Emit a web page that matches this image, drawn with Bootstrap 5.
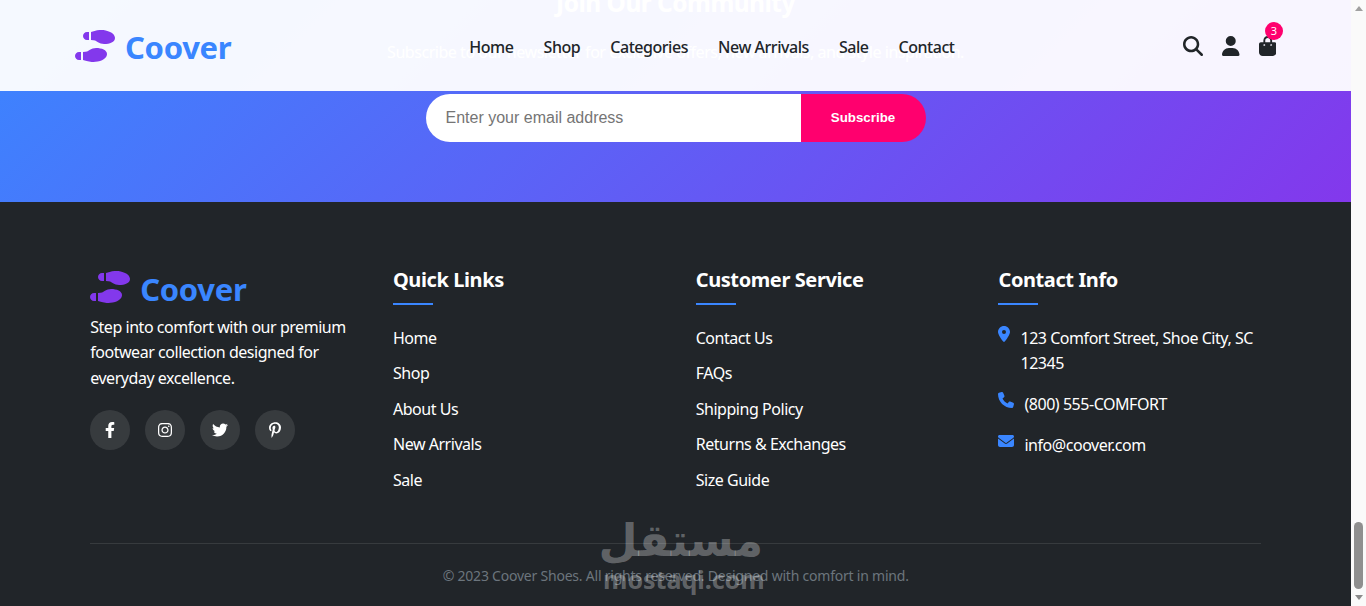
<!DOCTYPE html>
<html lang="en">
<head>
  <meta charset="UTF-8">
  <title>Coover Shoes</title>
  <link href="https://cdn.jsdelivr.net/npm/bootstrap@5.3.2/dist/css/bootstrap.min.css" rel="stylesheet">
  <style>
    html, body {
      height: 606px;
      overflow: hidden;
    }
    body {
      font-family: "Noto Sans", "Open Sans", sans-serif;
      font-size: 16px;
      line-height: 1.6;
      letter-spacing: -0.46px;
      background-color: #fff;
    }
    svg {
      fill: currentColor;
      display: block;
      flex-shrink: 0;
    }
    .page-main {
      width: 1351px;
      height: 606px;
    }
    .top-nav {
      height: 91px;
      background-color: rgba(255, 255, 255, 0.95);
    }
    .nav-inner {
      width: 1201px;
      margin: 0 auto;
      height: 100%;
    }
    .brand-link {
      gap: 10px;
    }
    .brand-text {
      font-size: 31px;
      font-weight: 700;
      color: #3a86ff;
      line-height: 46px;
      letter-spacing: -0.3px;
    }
    .brand-icon {
      color: #8338ec;
      width: 40px;
      height: 32px;
    }
    .top-nav .brand-text {
      margin-top: 3px;
    }
    .footer-brand .brand-icon {
      margin-top: -6px;
    }
    .footer-brand .brand-text {
      margin-top: -1px;
    }
    .main-links {
      gap: 30px;
      margin-left: 238px;
      margin-top: 5px;
    }
    .main-links a {
      color: #212529;
      font-weight: 500;
      text-decoration: none;
    }
    .nav-icons {
      gap: 19px;
      color: #212529;
      margin-left: auto;
      margin-top: 1px;
    }
    .cart-count {
      top: -14px;
      right: -7px;
      width: 18px;
      height: 18px;
      font-size: 11px;
      line-height: 18px;
      letter-spacing: 0;
      background-color: #ff006e;
      color: #fff;
    }
    .hero-band {
      height: 202px;
      padding-bottom: 60px;
      overflow: hidden;
      background: linear-gradient(135deg, #3a86ff, #8338ec);
      color: #fff;
    }
    .hero-band > * {
      flex-shrink: 0;
    }
    .hero-band h2 {
      font-size: 24.4px;
      font-weight: 700;
      margin-bottom: 23px;
      white-space: nowrap;
    }
    .hero-band p {
      margin-bottom: 28px;
      white-space: nowrap;
    }
    .sub-form {
      width: 500px;
      height: 48px;
    }
    .sub-form input {
      border: 0;
      outline: 0;
      width: 375px;
      padding: 0 20px;
      font-family: "Liberation Sans", sans-serif;
      font-size: 16px;
      letter-spacing: 0;
      border-radius: 50px 0 0 50px;
    }
    .sub-form input::placeholder {
      color: #757575;
    }
    .sub-form button {
      border: 0;
      width: 125px;
      background-color: #ff006e;
      color: #fff;
      font-family: "Liberation Sans", sans-serif;
      font-size: 13.33px;
      font-weight: 700;
      letter-spacing: 0;
      border-radius: 0 50px 50px 0;
    }
    .site-footer {
      height: 404px;
      background-color: #212529;
      color: #fff;
      padding-top: 60px;
    }
    .footer-inner {
      width: 1171px;
      margin-left: 90.2px;
    }
    .footer-cols {
      --bs-gutter-x: 40px;
    }
    .footer-brand {
      padding-top: 5px;
      margin-bottom: 2.5px;
      gap: 10px;
    }
    .footer-about {
      margin-bottom: 18.5px;
    }
    .round-social {
      width: 40px;
      height: 40px;
      background-color: rgba(255, 255, 255, 0.1);
      color: #fff;
    }
    .social-row {
      gap: 15px;
    }
    .col-heading {
      position: relative;
      font-size: 20px;
      font-weight: 700;
      line-height: 36px;
      padding-bottom: 7px;
      margin-bottom: 20.5px;
      letter-spacing: -0.4px;
    }
    .col-heading::after {
      content: "";
      position: absolute;
      left: 0;
      bottom: 0;
      width: 40px;
      height: 2px;
      background-color: #3a86ff;
    }
    .foot-links li {
      margin-bottom: 10px;
    }
    .foot-links a {
      color: #fff;
      text-decoration: none;
    }
    .contact-list li {
      margin-bottom: 15.3px;
    }
    .contact-icon {
      color: #3a86ff;
      margin-right: 10px;
    }
    .copy-row {
      margin-top: 39.5px;
      border-top: 1px solid rgba(255, 255, 255, 0.1);
      padding-top: 21px;
      font-size: 14px;
      letter-spacing: -0.22px;
      text-align: center;
      color: #6c757d;
    }
    .watermark {
      left: 603px;
      top: 513px;
      width: 160px;
      color: rgba(255, 255, 255, 0.3);
      pointer-events: none;
      letter-spacing: 0;
    }
    .watermark .wm-ar {
      font-family: "DejaVu Sans", sans-serif;
      font-size: 45px;
      font-weight: 700;
      line-height: 56px;
    }
    .watermark .wm-en {
      font-family: "Noto Sans", sans-serif;
      font-size: 25px;
      font-weight: 700;
      line-height: 22px;
      margin-top: -1px;
    }
    .fake-scroll {
      width: 15px;
      height: 606px;
      background-color: #fafafa;
    }
    .scroll-up, .scroll-down {
      width: 0;
      height: 0;
      border-left: 4.5px solid transparent;
      border-right: 4.5px solid transparent;
    }
    .scroll-up {
      margin-top: 6px;
      border-bottom: 5px solid #a0a0a0;
    }
    .scroll-down {
      margin-top: 6px;
      margin-bottom: 6px;
      border-top: 5px solid #8a8a8a;
    }
    .scroll-thumb {
      width: 9px;
      height: 67px;
      margin-top: auto;
      border-radius: 5px;
      background-color: #8f8f8f;
    }
  </style>
</head>
<body>
  <div class="d-flex">
    <div class="page-main position-relative">
      <nav class="top-nav position-absolute top-0 start-0 end-0">
        <div class="nav-inner d-flex align-items-center">
          <a href="#" class="brand-link d-flex align-items-center text-decoration-none">
            <svg class="brand-icon" viewBox="0 0 640 512"><path d="M192 160h32V32h-32c-35.35 0-64 28.65-64 64s28.65 64 64 64zM0 416c0 35.35 28.65 64 64 64h32V352H64c-35.35 0-64 28.65-64 64zm337.46-128c-34.91 0-76.16 13.12-104.73 32-24.79 16.38-44.52 32-104.73 32v128l57.53 15.97c26.21 7.28 53.01 13.12 80.51 15.03 32.69 2.27 65.6.67 97.58-6.2C472.9 481.3 512 429.22 512 384c0-64-84.18-96-174.54-96zM491.42 7.19C459.44.32 426.53-1.28 393.84.99c-27.5 1.91-54.3 7.75-80.51 15.03L256 32v128c60.2 0 79.94 15.62 104.73 32 28.57 18.88 69.82 32 104.73 32C555.82 224 640 192 640 128c0-45.22-39.1-97.3-148.58-120.81z"/></svg>
            <span class="brand-text">Coover</span>
          </a>
          <div class="main-links d-flex">
            <a href="#">Home</a>
            <a href="#">Shop</a>
            <a href="#">Categories</a>
            <a href="#">New Arrivals</a>
            <a href="#">Sale</a>
            <a href="#">Contact</a>
          </div>
          <div class="nav-icons d-flex align-items-center">
            <svg width="20" height="20" viewBox="0 0 512 512"><path d="M416 208c0 45.9-14.9 88.3-40 122.7L502.6 457.4c12.5 12.5 12.5 32.8 0 45.3s-32.8 12.5-45.3 0L330.7 376c-34.4 25.2-76.8 40-122.7 40C93.1 416 0 322.9 0 208S93.1 0 208 0S416 93.1 416 208zM208 352a144 144 0 1 0 0-288 144 144 0 1 0 0 288z"/></svg>
            <svg width="17.5" height="20" viewBox="0 0 448 512"><path d="M224 256A128 128 0 1 0 224 0a128 128 0 1 0 0 256zm-45.7 48C79.8 304 0 383.8 0 482.3C0 498.7 13.3 512 29.7 512H418.3c16.4 0 29.7-13.3 29.7-29.7C448 383.8 368.2 304 269.7 304H178.3z"/></svg>
            <div class="position-relative">
              <svg width="17.5" height="20" viewBox="0 0 448 512"><path d="M160 112c0-35.3 28.7-64 64-64s64 28.7 64 64v48H160V112zm-48 48H48c-26.5 0-48 21.5-48 48V416c0 53 43 96 96 96H352c53 0 96-43 96-96V208c0-26.5-21.5-48-48-48H336V112C336 50.1 285.9 0 224 0S112 50.1 112 112v48zm24 96c-13.3 0-24-10.7-24-24s10.7-24 24-24s24 10.7 24 24s-10.7 24-24 24zm200-24c0 13.3-10.7 24-24 24s-24-10.7-24-24s10.7-24 24-24s24 10.7 24 24z"/></svg>
              <span class="cart-count position-absolute rounded-circle text-center">3</span>
            </div>
          </div>
        </div>
      </nav>

      <section class="hero-band d-flex flex-column align-items-center justify-content-end">
        <h2>Join Our Community</h2>
        <p>Subscribe to our newsletter for exclusive offers, new arrivals, and style inspiration.</p>
        <form class="sub-form d-flex">
          <input type="email" placeholder="Enter your email address">
          <button type="button">Subscribe</button>
        </form>
      </section>

      <footer class="site-footer">
        <div class="footer-inner">
          <div class="row footer-cols">
            <div class="col-3">
              <div class="footer-brand d-flex align-items-center">
                <svg class="brand-icon" viewBox="0 0 640 512"><path d="M192 160h32V32h-32c-35.35 0-64 28.65-64 64s28.65 64 64 64zM0 416c0 35.35 28.65 64 64 64h32V352H64c-35.35 0-64 28.65-64 64zm337.46-128c-34.91 0-76.16 13.12-104.73 32-24.79 16.38-44.52 32-104.73 32v128l57.53 15.97c26.21 7.28 53.01 13.12 80.51 15.03 32.69 2.27 65.6.67 97.58-6.2C472.9 481.3 512 429.22 512 384c0-64-84.18-96-174.54-96zM491.42 7.19C459.44.32 426.53-1.28 393.84.99c-27.5 1.91-54.3 7.75-80.51 15.03L256 32v128c60.2 0 79.94 15.62 104.73 32 28.57 18.88 69.82 32 104.73 32C555.82 224 640 192 640 128c0-45.22-39.1-97.3-148.58-120.81z"/></svg>
                <span class="brand-text">Coover</span>
              </div>
              <p class="footer-about">Step into comfort with our premium footwear collection designed for everyday excellence.</p>
              <div class="social-row d-flex">
                <a href="#" class="round-social rounded-circle d-flex align-items-center justify-content-center"><svg width="10" height="16" viewBox="0 0 320 512"><path d="M279.14 288l14.22-92.66h-88.91v-60.13c0-25.35 12.42-50.06 52.24-50.06h40.42V6.26S260.43 0 225.36 0c-73.22 0-121.08 44.38-121.08 124.72v70.62H22.89V288h81.39v224h100.17V288z"/></svg></a>
                <a href="#" class="round-social rounded-circle d-flex align-items-center justify-content-center"><svg width="14" height="16" viewBox="0 0 448 512"><path d="M224.1 141c-63.6 0-114.9 51.3-114.9 114.9s51.3 114.9 114.9 114.9S339 319.5 339 255.9 287.7 141 224.1 141zm0 189.6c-41.1 0-74.7-33.5-74.7-74.7s33.5-74.7 74.7-74.7 74.7 33.5 74.7 74.7-33.6 74.7-74.7 74.7zm146.4-194.3c0 14.9-12 26.8-26.8 26.8-14.9 0-26.8-12-26.8-26.8s12-26.8 26.8-26.8 26.8 12 26.8 26.8zm76.1 27.2c-1.7-35.9-9.9-67.7-36.2-93.9-26.2-26.2-58-34.4-93.9-36.2-37-2.1-147.9-2.1-184.9 0-35.8 1.7-67.6 9.9-93.9 36.1s-34.4 58-36.2 93.9c-2.1 37-2.1 147.9 0 184.9 1.7 35.9 9.9 67.7 36.2 93.9s58 34.4 93.9 36.2c37 2.1 147.9 2.1 184.9 0 35.9-1.7 67.7-9.9 93.9-36.2 26.2-26.2 34.4-58 36.2-93.9 2.1-37 2.1-147.8 0-184.8zM398.8 388c-7.8 19.6-22.9 34.7-42.6 42.6-29.5 11.7-99.5 9-132.1 9s-102.7 2.6-132.1-9c-19.6-7.8-34.7-22.9-42.6-42.6-11.7-29.5-9-99.5-9-132.1s-2.6-102.7 9-132.1c7.8-19.6 22.9-34.7 42.6-42.6 29.5-11.7 99.5-9 132.1-9s102.7-2.6 132.1 9c19.6 7.8 34.7 22.9 42.6 42.6 11.7 29.5 9 99.5 9 132.1s2.7 102.7-9 132.1z"/></svg></a>
                <a href="#" class="round-social rounded-circle d-flex align-items-center justify-content-center"><svg width="16" height="16" viewBox="0 0 512 512"><path d="M459.37 151.716c.325 4.548.325 9.097.325 13.645 0 138.72-105.583 298.558-298.558 298.558-59.452 0-114.68-17.219-161.137-47.106 8.447.974 16.568 1.299 25.34 1.299 49.055 0 94.213-16.568 130.274-44.832-46.132-.975-84.792-31.188-98.112-72.772 6.498.974 12.995 1.624 19.818 1.624 9.421 0 18.843-1.3 27.614-3.573-48.081-9.747-84.143-51.98-84.143-102.985v-1.299c13.969 7.797 30.214 12.67 47.431 13.319-28.264-18.843-46.781-51.005-46.781-87.391 0-19.492 5.197-37.36 14.294-52.954 51.655 63.675 129.3 105.258 216.365 109.807-1.624-7.797-2.599-15.918-2.599-24.04 0-57.828 46.782-104.934 104.934-104.934 30.213 0 57.502 12.67 76.67 33.137 23.715-4.548 46.456-13.32 66.599-25.34-7.798 24.366-24.366 44.833-46.132 57.827 21.117-2.273 41.584-8.122 60.426-16.243-14.292 20.791-32.161 39.308-52.628 54.253z"/></svg></a>
                <a href="#" class="round-social rounded-circle d-flex align-items-center justify-content-center"><svg width="12" height="16" viewBox="0 0 384 512"><path d="M204 6.5C101.4 6.5 0 74.9 0 185.6 0 256 39.6 296 63.6 296c9.9 0 15.6-27.6 15.6-35.4 0-9.3-23.7-29.1-23.7-67.8 0-80.4 61.2-137.4 140.4-137.4 68.1 0 118.5 38.7 118.5 109.8 0 53.1-21.3 152.7-90.3 152.7-24.9 0-46.2-18-46.2-43.8 0-37.8 26.4-74.4 26.4-113.4 0-66.2-93.9-54.2-93.9 25.8 0 16.8 2.1 35.4 9.6 50.7-13.8 59.4-42 147.9-42 209.1 0 18.9 2.7 37.5 4.5 56.4 3.4 3.8 1.7 3.4 6.9 1.5 50.4-69 48.6-82.5 71.4-172.8 12.3 23.4 44.1 36 69.3 36 106.2 0 153.9-103.5 153.9-196.8C384 71.3 298.2 6.5 204 6.5z"/></svg></a>
              </div>
            </div>
            <div class="col-3">
              <div class="col-heading">Quick Links</div>
              <ul class="foot-links list-unstyled mb-0">
                <li><a href="#">Home</a></li>
                <li><a href="#">Shop</a></li>
                <li><a href="#">About Us</a></li>
                <li><a href="#">New Arrivals</a></li>
                <li><a href="#">Sale</a></li>
              </ul>
            </div>
            <div class="col-3">
              <div class="col-heading">Customer Service</div>
              <ul class="foot-links list-unstyled mb-0">
                <li><a href="#">Contact Us</a></li>
                <li><a href="#">FAQs</a></li>
                <li><a href="#">Shipping Policy</a></li>
                <li><a href="#">Returns &amp; Exchanges</a></li>
                <li><a href="#">Size Guide</a></li>
              </ul>
            </div>
            <div class="col-3">
              <div class="col-heading">Contact Info</div>
              <ul class="contact-list list-unstyled mb-0">
                <li class="d-flex"><svg class="contact-icon" width="12" height="16" viewBox="0 0 384 512"><path d="M215.7 499.2C267 435 384 279.4 384 192C384 86 298 0 192 0S0 86 0 192c0 87.4 117 243 168.3 307.2c12.3 15.3 35.1 15.3 47.4 0zM192 128a64 64 0 1 1 0 128 64 64 0 1 1 0-128z"/></svg><span>123 Comfort Street, Shoe City, SC 12345</span></li>
                <li class="d-flex"><svg class="contact-icon" width="16" height="16" viewBox="0 0 512 512"><path d="M164.9 24.6c-7.7-18.6-28-28.5-47.4-23.2l-88 24C12.1 30.2 0 46 0 64C0 311.4 200.6 512 448 512c18 0 33.8-12.1 38.6-29.5l24-88c5.3-19.4-4.6-39.7-23.2-47.4l-96-40c-16.3-6.8-35.2-2.1-46.3 11.6L304.7 368C234.3 334.7 177.3 277.7 144 207.3L193.3 167c13.7-11.2 18.4-30 11.6-46.3l-40-96z"/></svg><span>(800) 555-COMFORT</span></li>
                <li class="d-flex"><svg class="contact-icon" width="16" height="16" viewBox="0 0 512 512"><path d="M48 64C21.5 64 0 85.5 0 112c0 15.1 7.1 29.3 19.2 38.4L236.8 313.6c11.4 8.5 27 8.5 38.4 0L492.8 150.4c12.1-9.1 19.2-23.3 19.2-38.4c0-26.5-21.5-48-48-48H48zM0 176V384c0 35.3 28.7 64 64 64H448c35.3 0 64-28.7 64-64V176L294.4 339.2c-22.8 17.1-54 17.1-76.8 0L0 176z"/></svg><span>info@coover.com</span></li>
              </ul>
            </div>
          </div>
          <div class="copy-row">© 2023 Coover Shoes. All rights reserved. Designed with comfort in mind.</div>
        </div>
      </footer>

      <div class="watermark position-absolute text-center">
        <div class="wm-ar" lang="ar" dir="rtl">مستقل</div>
        <div class="wm-en">mostaqi.com</div>
      </div>
    </div>

    <div class="fake-scroll d-flex flex-column align-items-center">
      <div class="scroll-up"></div>
      <div class="scroll-thumb"></div>
      <div class="scroll-down"></div>
    </div>
  </div>

  <script src="https://cdn.jsdelivr.net/npm/bootstrap@5.3.2/dist/js/bootstrap.bundle.min.js"></script>
</body>
</html>
